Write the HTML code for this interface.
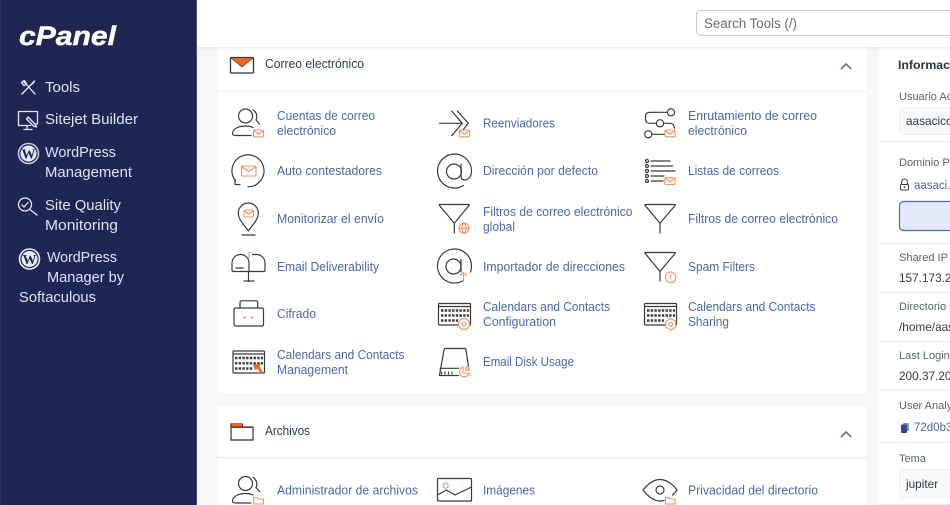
<!DOCTYPE html>
<html lang="es"><head><meta charset="utf-8"><title>cPanel</title>
<style>
html,body{margin:0;padding:0;width:950px;height:505px;overflow:hidden;background:#f7f7f8}
svg{position:absolute;left:0;top:0;display:block}
text{font-family:"Liberation Sans",sans-serif}
.l{font-size:12.6px;fill:#4a69a6}
.h{font-size:12.6px;fill:#2d3a55}
.s{font-size:14.4px;fill:#dde4f6}
.g{font-size:11px;fill:#5a6270}
.v{font-size:11.8px;fill:#333a45}
.i{fill:none;stroke:#3a3a3a;stroke-width:1.2;stroke-linecap:round;stroke-linejoin:round}
.o{fill:none;stroke:#f78f5f;stroke-width:1.1;stroke-linejoin:round;stroke-linecap:round}
.w{fill:none;stroke:#e8ecf8;stroke-width:1.3;stroke-linecap:round;stroke-linejoin:round}
.d{fill:none;stroke:#3a3a3a;stroke-width:2.4;stroke-dasharray:2.4 1.3}
</style></head><body>
<svg width="950" height="505" viewBox="0 0 950 505" xmlns="http://www.w3.org/2000/svg">
<defs>
<filter id="sh" x="-5%" y="-50%" width="110%" height="200%"><feDropShadow dx="0" dy="1" stdDeviation="2" flood-color="#000" flood-opacity=".09"/></filter>
</defs>
<!-- panels -->
<rect x="217" y="40" width="650" height="353" rx="4" fill="#fff"/>
<rect x="217" y="91" width="650" height="1" fill="#e9edf4"/>
<rect x="217" y="406" width="650" height="110" rx="4" fill="#fff"/>
<rect x="217" y="457" width="650" height="1" fill="#e3e9f3"/>
<rect x="879" y="40" width="80" height="465" fill="#fff"/>
<rect x="879" y="504" width="71" height="1" fill="#e6e8ec"/>
<rect x="197" y="0" width="753" height="47" fill="#fff" filter="url(#sh)"/>
<rect x="696.5" y="10.5" width="270" height="25" rx="4" fill="#fff" stroke="#c9ccd6"/>
<text x="704" y="28" font-size="13.5" fill="#676c75" textLength="93" lengthAdjust="spacingAndGlyphs">Search Tools (/)</text>

<!-- sidebar -->
<rect x="0" y="0" width="197" height="505" fill="#1f2654"/>
<rect x="196" y="0" width="1" height="505" fill="#46507f"/>
<rect x="0" y="0" width="1" height="505" fill="#2c3463"/>
<text x="19" y="45" font-size="27" font-weight="bold" font-style="italic" fill="#fff" stroke="#fff" stroke-width=".5" textLength="97" lengthAdjust="spacingAndGlyphs">cPanel</text>
<text x="45" y="92" class="s" textLength="35" lengthAdjust="spacingAndGlyphs">Tools</text>
<text x="45" y="124" class="s" textLength="93" lengthAdjust="spacingAndGlyphs">Sitejet Builder</text>
<text x="45" y="157" class="s" textLength="71" lengthAdjust="spacingAndGlyphs">WordPress</text>
<text x="45" y="177" class="s" textLength="87" lengthAdjust="spacingAndGlyphs">Management</text>
<text x="45" y="210" class="s" textLength="76" lengthAdjust="spacingAndGlyphs">Site Quality</text>
<text x="45" y="230" class="s" textLength="73" lengthAdjust="spacingAndGlyphs">Monitoring</text>
<text x="47" y="262" class="s" textLength="70" lengthAdjust="spacingAndGlyphs">WordPress</text>
<text x="47" y="282" class="s" textLength="77" lengthAdjust="spacingAndGlyphs">Manager by</text>
<text x="19" y="302" class="s" textLength="77" lengthAdjust="spacingAndGlyphs">Softaculous</text>
<!-- tools icon -->
<path class="w" stroke-width="1.8" d="M23 81l3 3 9 10M34.500 81l-12.500 13M34.500 81l-2 3"/>
<path class="w" d="M21.500 82.500l3-1.800 2 3-2.500 2z"/>
<!-- sitejet icon -->
<path class="w" d="M35 124h2.500v-12.500h-19v14h12M24 129.500h8M27 126v3"/>
<path class="w" d="M28 117l7 7 1.500 3-3-1-7-7z"/>
<!-- wp icons -->
<circle cx="28.500" cy="153.500" r="10" fill="none" stroke="#c5cbe0" stroke-width="1.600"/>
<circle cx="28.500" cy="153.500" r="8" fill="#e6e9f4"/>
<text x="28.500" y="158.500" text-anchor="middle" font-size="14" font-weight="bold" fill="#1f2654" style="font-family:'Liberation Serif',serif">W</text>
<circle cx="29.500" cy="259" r="10" fill="none" stroke="#e8ecf8" stroke-width="1.600"/>
<circle cx="29.500" cy="259" r="8" fill="#e6e9f4"/>
<text x="29.500" y="264" text-anchor="middle" font-size="14" font-weight="bold" fill="#1f2654" style="font-family:'Liberation Serif',serif">W</text>
<!-- quality icon -->
<circle class="w" cx="25" cy="204.500" r="6.500"/>
<path class="w" d="M22 205l2 2 4-4.500"/>
<path class="w" stroke-width="2.200" d="M30.500 210l6.500 5"/>

<!-- section headers -->
<text class="h" x="265" y="68" textLength="99" lengthAdjust="spacingAndGlyphs">Correo electrónico</text>
<text class="h" x="265" y="435" textLength="45" lengthAdjust="spacingAndGlyphs">Archivos</text>
<path d="M841 69l5-5 5 5" fill="none" stroke="#5d7599" stroke-width="1.600"/>
<path d="M841 437l5-5 5 5" fill="none" stroke="#5d7599" stroke-width="1.600"/>
<rect x="230.500" y="57.500" width="23" height="15.500" rx="1" fill="#fff" stroke="#333" stroke-width="1.300"/>
<path d="M231 58h22l-11 9z" fill="#f4661b"/>
<path d="M231 58l11 9 11-9" fill="none" stroke="#333" stroke-width=".6"/>
<path d="M231 440h22v-13h-10l-1-3h-11z" fill="#fff" stroke="#333" stroke-width="1.200" stroke-linejoin="round"/>
<rect x="231.500" y="424" width="10.500" height="3" fill="#f4661b"/>
<rect x="231" y="426.500" width="22" height="1.400" fill="#7a2a10"/>

<!-- links col 1 -->
<text class="l" x="277" y="120" textLength="98" lengthAdjust="spacingAndGlyphs">Cuentas de correo</text>
<text class="l" x="277" y="135" textLength="59" lengthAdjust="spacingAndGlyphs">electrónico</text>
<text class="l" x="277" y="175" textLength="105" lengthAdjust="spacingAndGlyphs">Auto contestadores</text>
<text class="l" x="277" y="223" textLength="107" lengthAdjust="spacingAndGlyphs">Monitorizar el envío</text>
<text class="l" x="277" y="271" textLength="102" lengthAdjust="spacingAndGlyphs">Email Deliverability</text>
<text class="l" x="277" y="318" textLength="39" lengthAdjust="spacingAndGlyphs">Cifrado</text>
<text class="l" x="277" y="359" textLength="127.500" lengthAdjust="spacingAndGlyphs">Calendars and Contacts</text>
<text class="l" x="277" y="374" textLength="71" lengthAdjust="spacingAndGlyphs">Management</text>
<text class="l" x="277" y="494.500" textLength="141" lengthAdjust="spacingAndGlyphs">Administrador de archivos</text>
<!-- links col 2 -->
<text class="l" x="483" y="127.500" textLength="72" lengthAdjust="spacingAndGlyphs">Reenviadores</text>
<text class="l" x="483" y="175" textLength="115" lengthAdjust="spacingAndGlyphs">Dirección por defecto</text>
<text class="l" x="483" y="216" textLength="149.500" lengthAdjust="spacingAndGlyphs">Filtros de correo electrónico</text>
<text class="l" x="483" y="231" textLength="32" lengthAdjust="spacingAndGlyphs">global</text>
<text class="l" x="483" y="271" textLength="142" lengthAdjust="spacingAndGlyphs">Importador de direcciones</text>
<text class="l" x="483" y="311" textLength="127" lengthAdjust="spacingAndGlyphs">Calendars and Contacts</text>
<text class="l" x="483" y="326" textLength="73" lengthAdjust="spacingAndGlyphs">Configuration</text>
<text class="l" x="483" y="366" textLength="91" lengthAdjust="spacingAndGlyphs">Email Disk Usage</text>
<text class="l" x="483" y="494.500" textLength="52" lengthAdjust="spacingAndGlyphs">Imágenes</text>
<!-- links col 3 -->
<text class="l" x="688" y="120" textLength="129" lengthAdjust="spacingAndGlyphs">Enrutamiento de correo</text>
<text class="l" x="688" y="135" textLength="59" lengthAdjust="spacingAndGlyphs">electrónico</text>
<text class="l" x="688" y="175" textLength="91" lengthAdjust="spacingAndGlyphs">Listas de correos</text>
<text class="l" x="688" y="223" textLength="150" lengthAdjust="spacingAndGlyphs">Filtros de correo electrónico</text>
<text class="l" x="688" y="271" textLength="67" lengthAdjust="spacingAndGlyphs">Spam Filters</text>
<text class="l" x="688" y="311" textLength="127.500" lengthAdjust="spacingAndGlyphs">Calendars and Contacts</text>
<text class="l" x="688" y="326" textLength="41" lengthAdjust="spacingAndGlyphs">Sharing</text>
<text class="l" x="688" y="494.500" textLength="130" lengthAdjust="spacingAndGlyphs">Privacidad del directorio</text>

<!-- cuentas -->
<circle class="i" cx="245.500" cy="116" r="7"/>
<path class="i" d="M253 110a7.500 7.500 0 0 1 3 10l3.500 4"/>
<path class="i" d="M251 135.500h-15c-2.500 0-3.500-1-3.500-2 0-5 7-7.500 13-7.500 3 0 5.500.5 7.500 1.500"/>
<rect class="o" x="253.500" y="130" width="10" height="7" rx="1.200"/><path class="o" d="M254 131l4.500 3 4.500-3"/>
<!-- auto -->
<path class="i" d="M248 186.800a16 16 0 1 0-12.500-6"/>
<path class="i" d="M235 179.500v5h5"/>
<rect class="o" x="241.500" y="166" width="14.500" height="10" rx="1"/><path class="o" d="M242 167l6.700 4.500 6.800-4.500"/>
<!-- monitor -->
<path class="i" d="M248.300 231c-3-5-10-10.500-10-18a10 10 0 0 1 20 0c0 7.500-7 13-10 18zM242 235h13"/>
<rect class="o" x="244" y="210" width="9.500" height="7" rx="1.500"/><path class="o" d="M244.500 211l4.200 3 4.300-3"/>
<!-- mailbox -->
<path class="i" d="M232 263a8.500 8.500 0 0 1 17 0v8.500h-15.500c-1 0-1.500-.5-1.500-1.500zM249 271.500h14.500c1 0 1.500-.5 1.500-1.500v-7a8.500 8.500 0 0 0-8.500-8.500h-4M236 268h7M248.500 271.500v10M244 281h10"/>
<path class="o" d="M249 258v-5.500h2"/>
<!-- cifrado -->
<rect class="i" x="234" y="308" width="29.500" height="18" rx="1.500"/>
<path class="i" d="M240 308v-5.500c0-1 .7-1.700 1.700-1.700h14.300c1 0 1.700.7 1.700 1.700v5.500"/>
<circle cx="244.500" cy="317.500" r="1.200" fill="#f78f5f"/><circle cx="252.300" cy="317.500" r="1.200" fill="#f78f5f"/>
<!-- cal manage -->
<rect class="i" x="233" y="351" width="31.500" height="22" rx="1"/>
<path class="i" d="M233 354h31.500"/>
<path class="d" d="M235 358h28M235 363.300h28M235 368.500h18"/>
<path d="M253 364.500l8-1-1.500 3 3.500 6-2 1.500-3.500-5.500-2.500 2z" fill="#f4661b"/>
<!-- admin -->
<circle class="i" cx="245.500" cy="483.500" r="7"/>
<path class="i" d="M253 477.500a7.500 7.500 0 0 1 3 10l3.500 4"/>
<path class="i" d="M251 503h-15c-2.500 0-3.500-1-3.500-2 0-5 7-7.500 13-7.500 3 0 5.500.5 7.500 1.500"/>
<path class="o" d="M253.500 504v-6.500h4l1 1.500h5v5z"/>

<!-- reenviadores -->
<path class="i" d="M439.500 123.300h22.500M451.700 111l10.600 12.300-10.600 12.400M457.300 111l11 12.300-5 6.200"/>
<rect class="o" x="459.500" y="130" width="10" height="6.800" rx="1"/><path class="o" d="M460 131l4.500 3 4.500-3"/>
<!-- @ -->
<path class="i" d="M461 164v12c0 3 1.500 4 3.500 4 2.500 0 7-2 7-9a17 17 0 1 0-8 14.500"/>
<circle class="i" cx="454" cy="171.500" r="7.500"/>
<!-- filter global -->
<path class="i" d="M439.500 204.500h29.500c.5 0 .5.500 0 1l-14.700 17.800-14.800-17.800c-.5-.5-.5-1 0-1zM454.300 223.300v9.700"/>
<circle class="o" cx="464" cy="228.300" r="5"/><path class="o" d="M459 228.300h10M464 223.300c-3 3-3 7 0 10M464 223.300c3 3 3 7 0 10"/>
<!-- importador -->
<path class="i" d="M462.500 281a17 17 0 1 1 9-14.500c0 2-.5 4-1 5.500"/>
<circle class="i" cx="453.500" cy="266.500" r="7.500"/><path class="i" d="M461 259.500v12.500"/>
<path class="o" d="M463.500 281.500v-9M460.500 275.500l3-3 3 3"/>
<!-- cal config -->
<rect class="i" x="438.500" y="303.500" width="32" height="21.500" rx="1"/>
<path class="i" d="M438.500 306.500h32"/>
<path class="d" d="M441 310.500h28M441 315.500h28M441 320.500h17"/>
<circle cx="464" cy="324" r="5.500" fill="#fff" stroke="#f78f5f" stroke-width="1.100"/><circle class="o" cx="464" cy="324" r="2"/>
<!-- disk -->
<path class="i" d="M445 348.500h20c.5 0 .8.300.9 1l4 26h-30.500l4.700-26c.1-.7.400-1 .9-1zM440 368.300h23"/>
<path class="i" d="M441.500 374v-2M445 374v-2M448.500 374v-2M452 374v-2"/>
<circle cx="464.500" cy="372" r="6.500" fill="#fff"/>
<path class="o" d="M463 367a5 5 0 1 0 6.200 6.200l-6.200-.2zM466 366.800a5 5 0 0 1 3.200 3.400l-3.200.1z"/>
<!-- imágenes -->
<rect class="i" x="437.500" y="478.500" width="34" height="22.500" rx="1"/>
<circle class="o" cx="445.700" cy="485.700" r="2.500"/>
<path class="i" d="M437.500 495l9-5 8.500 5 16.500-8"/>

<!-- routing -->
<circle class="i" cx="671" cy="112.300" r="3.600"/><circle class="i" cx="660" cy="123.300" r="3.600"/><circle class="i" cx="648.300" cy="134.300" r="3.600"/>
<path class="i" d="M667.400 112.300h-17.400c-3 0-4.500 1.500-4.500 4v3c0 2.500 1.500 4 4.500 4h6.400M663.600 123.300h6c3 0 4.800 1.500 4.800 5M651.900 134.300h12.600"/>
<rect class="o" x="665" y="130" width="10" height="6.800" rx="1"/><path class="o" d="M665.500 131l4.500 3 4.500-3"/>
<!-- lists -->
<g class="i" stroke-width="1"><circle cx="647" cy="161" r="1.500"/><circle cx="647" cy="166" r="1.500"/><circle cx="647" cy="171" r="1.500"/><circle cx="647" cy="176" r="1.500"/><circle cx="647" cy="181" r="1.500"/></g>
<path class="i" d="M651 161h19M651 166h21.500M651 171h24M651 176h13M651 181h12"/>
<rect class="o" x="665" y="177.700" width="10" height="6.800" rx="1"/><path class="o" d="M665.500 178.700l4.500 3 4.500-3"/>
<!-- filter -->
<path class="i" d="M645.500 204.500h29.500c.5 0 .5.500 0 1l-15 17.800-14.700-17.800c-.5-.5-.5-1 .2-1zM660 223.300v9.700"/>
<!-- spam -->
<path class="i" d="M645.500 252.500h29.500c.5 0 .5.500 0 1l-15 18-14.700-18c-.5-.5-.5-1 .2-1zM660 271.500v9.500"/>
<circle class="o" cx="670.700" cy="277.300" r="5.200"/><path class="o" d="M670.700 274.500v3.200M670.700 279.500v.4"/>
<!-- cal sharing -->
<rect class="i" x="644.500" y="303.500" width="32" height="21.500" rx="1"/>
<path class="i" d="M644.500 306.500h32"/>
<path class="d" d="M647 310.500h28M647 315.500h28M647 320.500h17"/>
<path d="M670.700 318.500l5 2.900v5.800l-5 2.900-5-2.900v-5.800z" fill="#fff" stroke="#f78f5f" stroke-width="1.100"/><circle class="o" cx="670.700" cy="324.300" r="1.800"/>
<!-- eye -->
<path class="i" d="M643 490c4-5 10-10.500 17-10.500s13.500 5.500 17 10.500c-1 1.500-2.500 3.500-4.500 5M664 500.500c-1.300.3-2.700.5-4 .5-7 0-13-6-17-11"/>
<circle class="i" cx="660" cy="490" r="4"/>
<path class="o" d="M665.500 504v-6.500h3.500l1 1.500h5v5z"/>

<!-- right panel -->
<text x="898" y="69" font-size="12.300" font-weight="bold" fill="#2b3240">Información</text>
<text class="g" x="899" y="100">Usuario Actual</text>
<rect x="899.500" y="107.500" width="70" height="27" rx="4" fill="#f8f9fb" stroke="#eef0f4"/>
<text class="v" x="906" y="125">aasacicom</text>
<rect x="879" y="141" width="71" height="1" fill="#e6e8ec"/>
<text class="g" x="899" y="166">Dominio Principal</text>
<path d="M901.500 184.500v-2.500a3 3 0 0 1 6 0v2.500" fill="none" stroke="#444" stroke-width="1.100"/>
<rect x="900.500" y="184.500" width="8" height="5.500" rx="1" fill="#fff" stroke="#444" stroke-width="1.100"/>
<circle cx="904.500" cy="187.300" r=".9" fill="#444"/>
<text x="914" y="189" font-size="11.500" fill="#4a69a6">aasaci.com</text>
<rect x="899.500" y="201.500" width="70" height="29" rx="4" fill="#e4e9f9" stroke="#4f6aa8" stroke-width="1.200"/>
<rect x="879" y="243" width="71" height="1" fill="#e6e8ec"/>
<text class="g" x="899" y="261">Shared IP Address</text>
<text class="v" x="899" y="282">157.173.210.1</text>
<rect x="879" y="292" width="71" height="1" fill="#e6e8ec"/>
<text class="g" x="899" y="310">Directorio raíz</text>
<text class="v" x="899" y="331">/home/aasaci</text>
<rect x="879" y="341" width="71" height="1" fill="#e6e8ec"/>
<text class="g" x="899" y="359">Last Login</text>
<text class="v" x="899" y="380">200.37.201.1</text>
<rect x="879" y="390" width="71" height="1" fill="#e6e8ec"/>
<text class="g" x="899" y="409">User Analytics</text>
<rect x="903" y="423" width="6" height="8" rx="1" fill="#7f95c4"/>
<rect x="901" y="424.500" width="6" height="8.500" rx="1" fill="#2d4a8e"/>
<text x="914" y="431" font-size="11.500" fill="#4a69a6">72d0b3a9</text>
<rect x="879" y="442" width="71" height="1" fill="#e6e8ec"/>
<text class="g" x="899" y="462">Tema</text>
<rect x="899.500" y="469.500" width="70" height="28" rx="4" fill="#f8f9fb" stroke="#eef0f4"/>
<text class="v" x="906" y="488">jupiter</text>
</svg>
</body></html>
